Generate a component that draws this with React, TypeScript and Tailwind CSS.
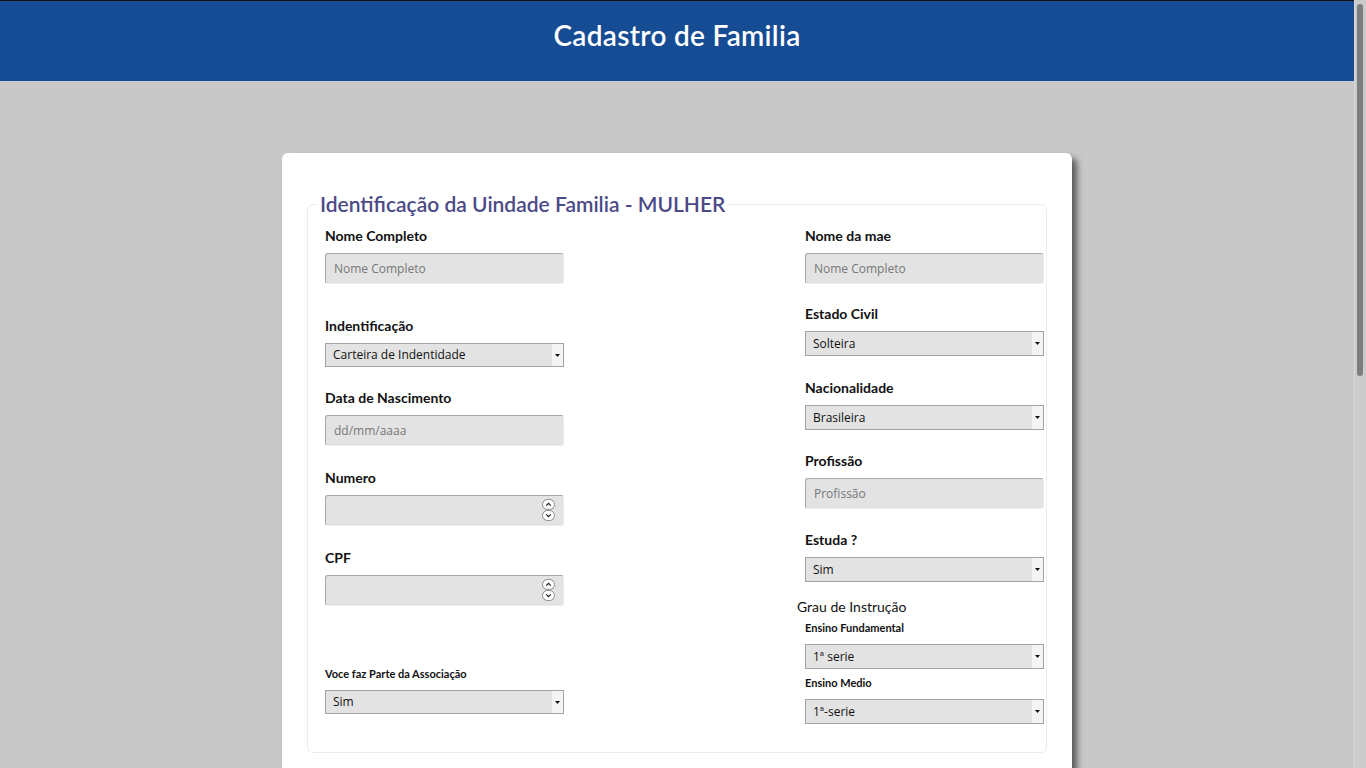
import React from "react";

const label = "block h-[18px] leading-[18px] mb-[8px] text-[14px] font-bold text-[#111] font-['Lato',sans-serif]";
const smallLabel = "block h-[14px] leading-[14px] mb-[9px] text-[11px] font-bold text-[#111] font-['Lato',sans-serif]";

function TextBox({ placeholder }: { placeholder: string }) {
  return (
    <input
      placeholder={placeholder}
      className="block w-[239px] h-[31px] rounded-[3px] border border-[#a9a9a9] border-b-[#ececec] border-r-[#ececec] bg-[#e3e3e3] px-[8px] text-[12px] text-[#333] placeholder:text-[#777] font-['Open_Sans',sans-serif] outline-none"
    />
  );
}

function NumberBox() {
  return (
    <div className="relative w-[239px] h-[31px] rounded-[3px] border border-[#a9a9a9] border-b-[#ececec] border-r-[#ececec] bg-[#e3e3e3]">
      <div className="absolute right-[8px] top-[3px] flex flex-col">
        {[0, 1].map((i) => (
          <svg key={i} width="13" height="11" viewBox="0 0 13 11">
            <rect x="0.5" y="0.5" width="12" height="10" rx="5" fill="#fff" stroke="#8a8a8a" />
            <path
              d={i === 0 ? "M4.2 6.6 L6.5 4.3 L8.8 6.6" : "M4.2 4.4 L6.5 6.7 L8.8 4.4"}
              fill="none"
              stroke="#222"
              strokeWidth="1.3"
            />
          </svg>
        ))}
      </div>
    </div>
  );
}

function Select({ value, h = "h-[25px]" }: { value: string; h?: string }) {
  return (
    <div className={`relative w-[239px] ${h} border border-[#a3a3a3] bg-[#e3e3e3]`}>
      <div className="flex h-full items-center pl-[7px] text-[12px] text-[#111] font-['Open_Sans',sans-serif]">
        {value}
      </div>
      <div className="absolute right-0 top-0 flex h-full w-[11px] items-center justify-center bg-[#f4f4f4]">
        <svg width="5" height="3" viewBox="0 0 5 3">
          <path d="M0 0 H5 L2.5 3 Z" fill="#111" />
        </svg>
      </div>
    </div>
  );
}

export default function App() {
  return (
    <div className="flex h-screen overflow-hidden bg-[#c8c8c8]">
      <main className="flex-1 overflow-y-auto pb-[50px]">
        <header className="flex h-[81px] items-center justify-center border-t border-[#111] bg-[#154c93] pb-[12px]">
          <h1 className="text-[28px] font-semibold tracking-[0.3px] text-white font-['Lato',sans-serif]">
            Cadastro de Familia
          </h1>
        </header>

        <div className="mx-auto mt-[72px] min-h-[1380px] w-[790px] rounded-[6px] bg-white px-[25px] pt-[39px] shadow-[5px_5px_6px_rgba(0,0,0,0.55)]">
          <fieldset className="rounded-[6px] border border-[#ececec] pl-[17px] pr-[2px] pb-[28px]">
            <legend className="-ml-[7px] -mt-[2px] px-[2px] text-[21px] leading-[24px] font-semibold text-[#4b4a86] font-['Lato',sans-serif]">
              Identificação da Uindade Familia - MULHER
            </legend>

            <div className="flex justify-between">
              <div className="w-[239px] pt-[11px]">
                <span className={label}>Nome Completo</span>
                <TextBox placeholder="Nome Completo" />

                <span className={`${label} mt-[33px]`}>Indentificação</span>
                <Select value="Carteira de Indentidade" h="h-[24px]" />

                <span className={`${label} mt-[22px]`}>Data de Nascimento</span>
                <TextBox placeholder="dd/mm/aaaa" />

                <span className={`${label} mt-[23px]`}>Numero</span>
                <NumberBox />

                <span className={`${label} mt-[23px]`}>CPF</span>
                <NumberBox />

                <span className={`${smallLabel} mt-[61px]`}>Voce faz Parte da Associação</span>
                <Select value="Sim" h="h-[24px]" />
              </div>

              <div className="w-[239px] pt-[11px]">
                <span className={label}>Nome da mae</span>
                <TextBox placeholder="Nome Completo" />

                <span className={`${label} mt-[21px]`}>Estado Civil</span>
                <Select value="Solteira" />

                <span className={`${label} mt-[23px]`}>Nacionalidade</span>
                <Select value="Brasileira" />

                <span className={`${label} mt-[22px]`}>Profissão</span>
                <TextBox placeholder="Profissão" />

                <span className={`${label} mt-[22px]`}>Estuda ?</span>
                <Select value="Sim" />

                <span className="-ml-[8px] mt-[16px] block h-[18px] leading-[18px] text-[14px] text-[#111] font-['Lato',sans-serif]">
                  Grau de Instrução
                </span>
                <span className={`${smallLabel} mt-[5px]`}>Ensino Fundamental</span>
                <Select value="1ª serie" />

                <span className={`${smallLabel} mt-[7px]`}>Ensino Medio</span>
                <Select value="1ª-serie" />
              </div>
            </div>
          </fieldset>
        </div>
      </main>

      {/* page scrollbar */}
      <aside className="w-[12px] shrink-0 border-l border-[#dcd8d4] bg-[#cbcbcb] pt-[4px] pl-[2px]">
        <div className="h-[372px] w-[6px] rounded-full bg-[#7b7e7e]" />
      </aside>
    </div>
  );
}
